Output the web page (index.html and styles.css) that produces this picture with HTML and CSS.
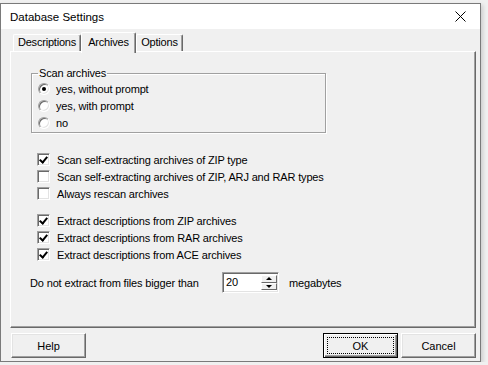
FILE: index.html
```html
<!DOCTYPE html>
<html lang="en">

<head>
  <meta charset="UTF-8">
  <title>Database Settings</title>
  <link rel="stylesheet" href="styles.css">
</head>

<body>
  <div class="window">
    <div class="titlebar">
      <span class="title">Database Settings</span>
      <span class="close">
        <svg width="11" height="11" viewBox="0 0 11 11">
          <path d="M0.5 0.5 L10.5 10.5 M10.5 0.5 L0.5 10.5" stroke="#000" stroke-width="1" fill="none" />
        </svg>
      </span>
    </div>

    <div class="dialog-body">
      <div class="tabs">
        <div class="tab tab-desc">Descriptions</div>
        <div class="tab tab-arch active">Archives</div>
        <div class="tab tab-opt">Options</div>
      </div>

      <div class="panel">
        <fieldset class="group">
          <legend>Scan archives</legend>
          <label class="option"><span class="radio checked"></span>yes, without prompt</label>
          <label class="option"><span class="radio"></span>yes, with prompt</label>
          <label class="option"><span class="radio"></span>no</label>
        </fieldset>

        <div class="checks checks-scan">
          <label class="check"><span class="box checked"></span>Scan self-extracting archives of ZIP type</label>
          <label class="check"><span class="box"></span>Scan self-extracting archives of ZIP, ARJ and RAR types</label>
          <label class="check"><span class="box"></span>Always rescan archives</label>
        </div>

        <div class="checks checks-extract">
          <label class="check"><span class="box checked"></span>Extract descriptions from ZIP archives</label>
          <label class="check"><span class="box checked"></span>Extract descriptions from RAR archives</label>
          <label class="check"><span class="box checked"></span>Extract descriptions from ACE archives</label>
        </div>

        <div class="size-row">
          <span class="size-label">Do not extract from files bigger than</span>
          <div class="spin">
            <span class="spin-value">20</span>
            <div class="spin-btns">
              <span class="spin-btn"><span class="arrow-up"></span></span>
              <span class="spin-btn"><span class="arrow-down"></span></span>
            </div>
          </div>
          <span class="size-unit">megabytes</span>
        </div>
      </div>

      <div class="buttons">
        <button class="btn btn-help">Help</button>
        <span class="spacer"></span>
        <button class="btn default"><span class="focus">OK</span></button>
        <button class="btn">Cancel</button>
      </div>
    </div>
  </div>
</body>

</html>
```

FILE: styles.css
```css
body {
  margin: 0;
  background: #f0f0f0;
  font-family: 'Liberation Sans', Arial, sans-serif;
  font-size: 11px;
  color: #000;
  overflow: hidden;
}

.window {
  margin-top: 3px;
  width: 479px;
  height: 357px;
  border: 1px solid #7a7a7a;
  background: #f0f0f0;
  display: flex;
  flex-direction: column;
  box-shadow: 2px 2px 4px rgba(0, 0, 0, 0.15);
}

.titlebar {
  height: 25px;
  background: #ffffff;
  display: flex;
  align-items: center;
  padding-left: 9px;
  padding-right: 14px;
}

.title {
  flex: 1;
  font-size: 11.5px;
  color: #000;
}

.close {
  display: flex;
  margin-top: -1px;
}

.dialog-body {
  flex: 1;
  display: flex;
  flex-direction: column;
  padding: 3px 4px 0 9px;
}

/* tabs */

.tabs {
  display: flex;
  align-items: flex-end;
  height: 19px;
  padding-left: 3px;
}

.tab {
  box-sizing: border-box;
  height: 17px;
  line-height: 15px;
  text-align: center;
  letter-spacing: -0.2px;
  border-top: 1px solid #ffffff;
  border-left: 1px solid #ffffff;
  border-right: 1px solid #696969;
  box-shadow: inset -1px 0 0 #a0a0a0;
  border-radius: 2px 2px 0 0;
  background: #f0f0f0;
}

.tab-desc {
  width: 68px;
}

.tab-arch {
  width: 55px;
}

.tab-opt {
  width: 47px;
}

.tab.active {
  height: 21px;
  line-height: 18px;
  margin-bottom: -2px;
  position: relative;
  z-index: 1;
}

.panel {
  box-sizing: border-box;
  height: 277px;
  border-top: 1px solid #ffffff;
  border-left: 1px solid #ffffff;
  border-right: 1px solid #696969;
  border-bottom: 1px solid #696969;
  box-shadow: inset -1px -1px 0 #a0a0a0;
  letter-spacing: -0.15px;
}

/* group box */

.group {
  width: 295px;
  box-sizing: border-box;
  margin: 16px 0 0 20px;
  padding: 1px 0 1px 6px;
  border: 1px solid #a0a0a0;
  box-shadow: 1px 1px 0 #ffffff, inset 1px 1px 0 #ffffff;
}

.group legend {
  padding: 0 1px;
  margin-left: 0;
  line-height: 11px;
}

.option,
.check {
  display: flex;
  align-items: center;
  height: 17px;
}

.radio {
  box-sizing: border-box;
  width: 12px;
  height: 12px;
  margin-right: 6px;
  border-radius: 50%;
  border: 1px solid;
  border-color: #a0a0a0 #ffffff #ffffff #a0a0a0;
  box-shadow: inset 1px 1px 0 #696969, inset -1px -1px 0 #e3e3e3;
  background: #ffffff;
  display: flex;
  align-items: center;
  justify-content: center;
}

.radio.checked::after {
  content: "";
  width: 4px;
  height: 4px;
  border-radius: 50%;
  background: #000;
}

/* checkboxes */

.checks {
  margin-left: 26px;
}

.checks-scan {
  margin-top: 18px;
}

.checks-extract {
  margin-top: 10px;
}

.box {
  box-sizing: border-box;
  width: 13px;
  height: 13px;
  margin-right: 7px;
  border: 1px solid;
  border-color: #a0a0a0 #ffffff #ffffff #a0a0a0;
  box-shadow: inset 1px 1px 0 #696969, inset -1px -1px 0 #e3e3e3;
  background: #ffffff;
  position: relative;
}

.box.checked::after {
  content: "";
  position: absolute;
  left: 3px;
  top: 1px;
  width: 3px;
  height: 6px;
  border-right: 2px solid #000;
  border-bottom: 2px solid #000;
  transform: rotate(40deg);
}

/* size row */

.size-row {
  display: flex;
  align-items: center;
  margin: 9px 0 0 19px;
}

.size-label {
  width: 192px;
}

.spin {
  box-sizing: border-box;
  width: 57px;
  height: 21px;
  display: flex;
  border: 1px solid;
  border-color: #a0a0a0 #ffffff #ffffff #a0a0a0;
  box-shadow: inset 1px 1px 0 #696969, inset -1px -1px 0 #e3e3e3;
  background: #ffffff;
  padding: 2px 1px 2px 2px;
}

.spin-value {
  flex: 1;
  padding-left: 1px;
  line-height: 14px;
}

.spin-btns {
  width: 16px;
  display: flex;
  flex-direction: column;
}

.spin-btn {
  flex: 1;
  box-sizing: border-box;
  background: #f0f0f0;
  border-top: 1px solid #ffffff;
  border-left: 1px solid #ffffff;
  border-right: 1px solid #696969;
  border-bottom: 1px solid #696969;
  display: flex;
  align-items: center;
  justify-content: center;
}

.arrow-up {
  border-left: 3px solid transparent;
  border-right: 3px solid transparent;
  border-bottom: 3px solid #000;
}

.arrow-down {
  border-left: 3px solid transparent;
  border-right: 3px solid transparent;
  border-top: 3px solid #000;
}

.size-unit {
  margin-left: 10px;
}

/* buttons */

.buttons {
  display: flex;
  margin-top: 5px;
}

.spacer {
  flex: 1;
}

.btn {
  box-sizing: border-box;
  width: 75px;
  height: 25px;
  padding: 0;
  font-family: inherit;
  font-size: 11px;
  background: #f0f0f0;
  border-top: 1px solid #ffffff;
  border-left: 1px solid #ffffff;
  border-right: 1px solid #696969;
  border-bottom: 1px solid #696969;
  box-shadow: inset -1px -1px 0 #a0a0a0, inset 1px 1px 0 #e3e3e3;
  color: #000;
}

.btn-help {
  margin-left: 1px;
}

.btn + .btn {
  margin-left: 3px;
}

.btn.default {
  border: 1px solid #000;
  box-shadow: inset 1px 1px 0 #ffffff, inset -1px -1px 0 #696969, inset -2px -2px 0 #a0a0a0;
  padding: 3px;
  display: flex;
}

.focus {
  flex: 1;
  border: 1px dotted #000;
  display: flex;
  align-items: center;
  justify-content: center;
}
```
